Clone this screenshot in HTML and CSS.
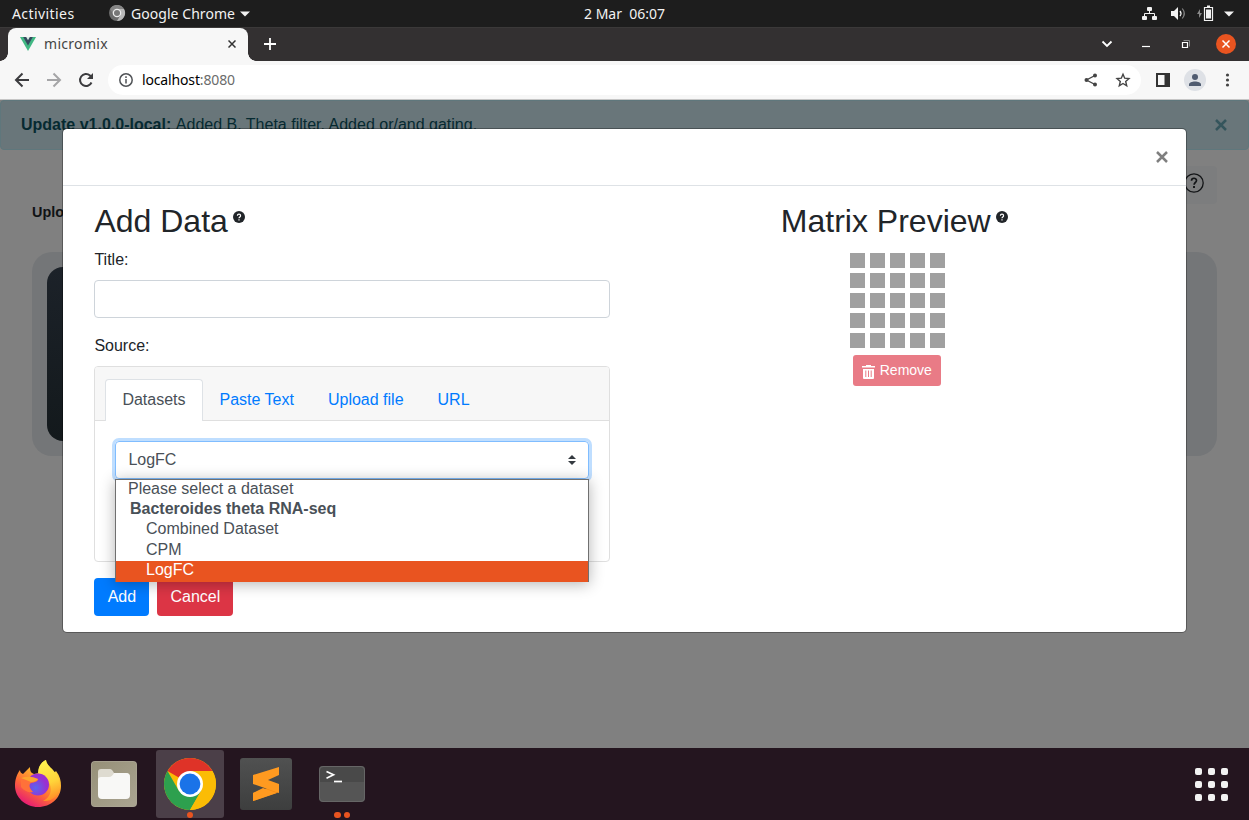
FILE: index.html
```html
<!DOCTYPE html>
<html lang="en">
<head>
<meta charset="utf-8">
<title>micromix</title>
<link rel="stylesheet" href="styles.css">
</head>
<body>
<div class="desktop">
  <header class="topbar">
    <span class="activities">Activities</span>
    <svg class="app-icon" width="17" height="17" viewBox="0 0 17 17"><circle cx="8" cy="8" r="8" fill="#6c6c6c"/><path d="M8 4H15A8 8 0 0 1 8 16L11.500 10z" fill="#b8b8b8"/><path d="M1 4A8 8 0 0 1 15 4H8L4.500 9.500z" fill="#858585"/><circle cx="8" cy="8" r="4.300" fill="#ededed"/><circle cx="8" cy="8" r="3" fill="#777"/></svg>
    <span class="app-name">Google Chrome</span>
    <svg class="app-arrow" width="10" height="6" viewBox="0 0 10 6"><path d="M0 .5h10L5 5.500z" fill="#f2f2f2"/></svg>
    <span class="clock">2 Mar&nbsp; 06:07</span>
    <svg class="tray" width="94" height="18" viewBox="0 0 94 18" fill="#f2f2f2">
      <rect x="5" y="2" width="5" height="4" rx="1"/><rect y="11" width="5" height="4" rx="1"/><rect x="10" y="11" width="5" height="4" rx="1"/><path d="M2.500 11V8.500h10V11M7.500 5v3.500" fill="none" stroke="#f2f2f2"/>
      <path d="M29 6h3l4-4v13l-4-4h-3z"/><path d="M38 6q2 2.500 0 5" fill="none" stroke="#f2f2f2" stroke-width="1.300"/><path d="M40.300 3.500q4 5 0 10" fill="none" stroke="#858585" stroke-width="1.200"/>
      <g transform="translate(-2 0)"><path d="M60 4l-3 5h2v4l3-5h-2z" fill="#888"/><path d="M64.500 2.500h8v13h-8z" fill="none" stroke="#f2f2f2" stroke-width="1.200"/><path d="M67 .5h3v2h-3zM66 4.500h5v9h-5z"/></g>
      <path d="M82 6.500h10l-5 5z"/>
    </svg>
  </header>

  <div class="tabstrip">
    <div class="tab">
      <svg width="16" height="14" viewBox="0 0 16 14"><path d="M0 0h16L8 14z" fill="#41b883"/><path d="M3.200 0h9.600L8 8.500z" fill="#34495e"/><path d="M6.200 0h3.600L8 3.200z" fill="#dceee6"/></svg>
      <span class="tab-title">micromix</span>
      <svg class="tab-close" width="8" height="8" viewBox="0 0 8 8"><path d="M.5.5l7 7m0-7l-7 7" stroke="#333" stroke-width="1.500"/></svg>
    </div>
    <svg class="newtab" width="12" height="12" viewBox="0 0 12 12"><path d="M6 0v12M0 6h12" stroke="#fff" stroke-width="1.800"/></svg>
    <svg class="window-buttons" width="136" height="22" viewBox="0 0 136 22" fill="none" stroke="#fff"><path d="M2.500 8.500l4.500 4.500 4.500-4.500" stroke-width="1.800"/><path d="M42 13.500h8" stroke-width="1.200"/><path d="M82.500 9.500h5v5h-5z" stroke-width="1.200"/><path d="M83.500 7.500h6v6" stroke="#888" stroke-width="1"/><circle cx="126" cy="11" r="10" fill="#e95420" stroke="none"/><path d="M122.500 7.500l7 7m0-7l-7 7" stroke-width="1.500"/></svg>
  </div>

  <div class="toolbar">
    <svg class="nav-icons" width="80" height="18" viewBox="0 0 80 18" fill="none" stroke="#3c3c3f" stroke-width="2"><path d="M15 9H2.500M8.500 2.500L2 9l6.500 6.500"/><path d="M33 9h12.500M39.500 2.500L46 9l-6.500 6.500" stroke="#a5a5a7"/><path d="M77.500 11.500A6 6 0 1 1 76 4.500L78 6.500"/><path d="M79 2v6h-6z" fill="#3c3c3f" stroke="none"/></svg>
    <div class="omnibox">
      <svg width="14" height="14" viewBox="0 0 14 14" fill="none" stroke="#505357" stroke-width="1.500"><circle cx="7" cy="7" r="6.200"/><path d="M7 6v4.500M7 3.300v1.600"/></svg>
      <span class="address"><b>localhost</b>:8080</span>
      <svg class="share" width="48" height="16" viewBox="0 0 48 16"><path d="M12 3.500L3.500 8l8.500 4.500" fill="none" stroke="#444" stroke-width="1.400"/><g fill="#444"><circle cx="12" cy="3.500" r="2"/><circle cx="3.500" cy="8" r="2"/><circle cx="12" cy="12.500" r="2"/></g><path d="M40 2.200l1.700 4 4.300.4-3.300 2.900 1 4.300-3.700-2.300-3.700 2.300 1-4.300L34 6.600l4.300-.4z" fill="none" stroke="#444" stroke-width="1.400"/></svg>
    </div>
    <svg class="chrome-actions" width="80" height="22" viewBox="0 0 80 22"><path d="M2 5h12v12H2z" fill="none" stroke="#333" stroke-width="2"/><path d="M9.500 4H15v14H9.500z" fill="#333"/><circle cx="40" cy="11" r="11" fill="#dee1e6"/><circle cx="40" cy="8" r="3" fill="#4f5b70"/><path d="M34 17v-1.500c0-4 12-4 12 0V17z" fill="#4f5b70"/><g fill="#444"><circle cx="72.500" cy="6" r="1.600"/><circle cx="72.500" cy="11" r="1.600"/><circle cx="72.500" cy="16" r="1.600"/></g></svg>
  </div>

  <main class="viewport">
    <div class="alert"><span><b>Update v1.0.0-local:</b> Added B. Theta filter. Added or/and gating.</span><svg width="12" height="12" viewBox="0 0 12 12"><path d="M1 1l10 10M11 1L1 11" stroke="#35555c" stroke-width="2.500"/></svg></div>
    <div class="page-tools"><svg width="20" height="20" viewBox="0 0 20 20" fill="none" stroke="#131517"><circle cx="10" cy="10" r="9.200" stroke-width="1.300"/><path d="M7.500 7.700c0-3.300 5-3.200 5-.2 0 2-2.400 2-2.400 4.200" stroke-width="1.700"/><path d="M10 13v2" stroke-width="1.900"/></svg></div>
    <div class="upload-label">Upload</div>
    <div class="page-card"><div class="dark-card"></div></div>

    <section class="modal">
      <div class="modal-header"><svg width="12" height="12" viewBox="0 0 12 12"><path d="M1 1l10 10M11 1L1 11" stroke="#7f7f7f" stroke-width="2.500"/></svg></div>
      <div class="modal-body">
        <div class="column">
          <h2>Add Data<svg class="help" width="12" height="12" viewBox="0 0 12 12"><circle cx="6" cy="6" r="6" fill="#212529"/><path d="M4.400 4.700c0-2 3.200-2 3.200 0C7.600 6 6 5.900 6 7.300M6 8.300v1.300" fill="none" stroke="#fff" stroke-width="1.200"/></svg></h2>
          <label for="title">Title:</label>
          <input class="title-input" id="title" type="text">
          <label>Source:</label>
          <div class="source-card">
            <nav class="source-tabs"><a class="active">Datasets</a><a>Paste Text</a><a>Upload file</a><a>URL</a></nav>
            <div class="source-body">
              <div class="select"><span>LogFC</span><svg width="8" height="10" viewBox="0 0 8 10"><path d="M0 4l4-4 4 4zM0 6h8l-4 4z" fill="#343a40"/></svg>
                <div class="options"><div class="placeholder">Please select a dataset</div><div class="group">Bacteroides theta RNA-seq</div><div>Combined Dataset</div><div class="lower">CPM</div><div class="lower selected">LogFC</div></div>
              </div>
            </div>
          </div>
          <div class="actions"><button class="btn add">Add</button><button class="btn cancel">Cancel</button></div>
        </div>
        <div class="column preview">
          <h2>Matrix Preview<svg class="help" width="12" height="12" viewBox="0 0 12 12"><circle cx="6" cy="6" r="6" fill="#212529"/><path d="M4.400 4.700c0-2 3.200-2 3.200 0C7.600 6 6 5.900 6 7.300M6 8.300v1.300" fill="none" stroke="#fff" stroke-width="1.200"/></svg></h2>
          <div class="matrix"><i></i><i></i><i></i><i></i><i></i><i></i><i></i><i></i><i></i><i></i><i></i><i></i><i></i><i></i><i></i><i></i><i></i><i></i><i></i><i></i><i></i><i></i><i></i><i></i><i></i></div>
          <button class="remove"><svg width="13" height="14" viewBox="0 0 13 14"><path d="M0 1h4V0h5v1h4v1.500H0zM1 4h11v9q0 1-1 1H2q-1 0-1-1z" fill="#fff"/><path d="M3.800 5.500V12M6.500 5.500V12M9.200 5.500V12" stroke="#e97b86"/></svg>Remove</button>
        </div>
      </div>
    </section>
  </main>

  <footer class="dock">
    <div class="launcher">
      <svg width="48" height="50" viewBox="0 0 48 50">
        <defs>
          <linearGradient id="fire" x1=".85" y1="0" x2=".25" y2="1"><stop stop-color="#fff44f"/><stop offset=".35" stop-color="#ffb52e"/><stop offset=".65" stop-color="#ff6b35"/><stop offset="1" stop-color="#e3137b"/></linearGradient>
          <linearGradient id="flame" x1=".4" y1="0" x2=".6" y2="1"><stop stop-color="#fff34f"/><stop offset=".55" stop-color="#ffd43a"/><stop offset="1" stop-color="#ff8a25"/></linearGradient>
          <radialGradient id="globe" cx=".4" cy=".65"><stop stop-color="#5a65ef"/><stop offset="1" stop-color="#9a2fd0"/></radialGradient>
        </defs>
        <path d="M6 11c0 2 1 3 3 4l7-7c0 4 1 6 4 7l5-1c-1-5 2-11 7-13 1 6 5 8 8 13l2-2c4 5 5 10 5 15 0 12-10 21-23 21S1 38 1 27c0-7 2-12 5-16z" fill="url(#fire)"/>
        <path d="M24 14C24 8 27 3 32 1c0 7 14 11 14 26 0 9-8 16-17 15 12-6 10-22-5-28z" fill="url(#flame)"/>
        <circle cx="24" cy="25.500" r="11" fill="url(#globe)"/>
        <path d="M7 20q6-3 17 0c0 3-3 3-7 4-3 2-1 6 2 9-4 1-9-1-12-5z" fill="#ff7139"/>
        <path d="M7 19q9-3 17 1-2 3-7 3-5-2-10-4z" fill="#ffa52e"/>
      </svg>
    </div>
    <div class="launcher"><svg width="46" height="46" viewBox="0 0 46 46"><defs><linearGradient id="files" x2="1" y2="1"><stop stop-color="#969078"/><stop offset="1" stop-color="#aaa491"/></linearGradient></defs><rect width="46" height="46" rx="4" fill="#aaa594"/><rect x=".7" y=".7" width="44.600" height="44.600" rx="3.500" fill="url(#files)"/><path d="M7 22V11q0-3 3-3h9q2 0 4 4h12q4 0 4 4v8z" fill="#dedbd0"/><path d="M7 19q0-3 3-3h8q3 0 5-4h12q4 0 4 4v18q0 4-4 4H11q-4 0-4-4z" fill="#f8f8f6"/></svg></div>
    <div class="launcher running">
      <svg width="52" height="52" viewBox="0 0 52 52"><circle cx="26" cy="26" r="26" fill="#fbbc05"/><path d="M26 26L3.500 13A26 26 0 0 1 48.500 13z" fill="#df3328"/><path d="M3.500 13A26 26 0 0 0 26 52L37.300 32.500 14.700 32.500z" fill="#2da04e"/><path d="M26 13h22.500A26 26 0 0 1 26 52L37.300 32.500z" fill="#fbbc05"/><circle cx="26" cy="26" r="13" fill="#fff"/><circle cx="26" cy="26" r="10.400" fill="#1a73e8"/></svg>
      <span class="dots"><i></i></span>
    </div>
    <div class="launcher"><svg width="52" height="52" viewBox="0 0 52 52"><defs><linearGradient id="sublime" x2="0" y2="1"><stop stop-color="#505151"/><stop offset="1" stop-color="#3d3e3e"/></linearGradient></defs><rect width="52" height="52" rx="3" fill="url(#sublime)"/><path d="M13 35l26-9v8L13 43z" fill="#f58b14"/><path d="M13 17L39 9v8l-11 5 11 4v9L13 26z" fill="#ff9a20"/><path d="M13 35l10-5 14 5L13 43z" fill="#ff9a20"/></svg></div>
    <div class="launcher"><svg width="46" height="36" viewBox="0 0 46 36"><rect width="46" height="36" rx="4" fill="#555"/><path d="M0 16V4q0-4 4-4h38q4 0 4 4v12z" fill="#494949"/><rect x=".5" y=".5" width="45" height="35" rx="3.500" fill="none" stroke="#666"/><path d="M7.500 5.500l7 3.300-7 3.400" fill="none" stroke="#fff" stroke-width="1.700"/><path d="M15 15.500h8" stroke="#fff" stroke-width="1.700"/></svg><span class="dots"><i></i><i></i></span></div>
    <div class="app-grid"><i></i><i></i><i></i><i></i><i></i><i></i><i></i><i></i><i></i></div>
  </footer>
</div>
</body>
</html>
```
FILE: styles.css
```css
* { box-sizing: border-box; }
body { margin: 0; font: 16px/1.5 "Liberation Sans", Arial, sans-serif; color: #212529; }
svg { display: block; flex-shrink: 0; }
.desktop { width: 1249px; height: 820px; display: flex; flex-direction: column; overflow: hidden; }

.topbar { height: 28px; flex-shrink: 0; display: flex; align-items: center; background: #1d1d1d; border-bottom: 1px solid #3b3939; color: #f2f2f2; font: 14px/27px "Noto Sans", sans-serif; padding: 0 13px 0 12px; white-space: nowrap; }
.activities { width: 97px; letter-spacing: .42px; }
.app-name { margin-left: 5px; width: 104px; letter-spacing: .05px; }
.app-arrow { margin-left: 5px; }
.clock { margin-left: 334px; }
.tray { margin-left: auto; }

.tabstrip { height: 33px; flex-shrink: 0; display: flex; align-items: center; background: #333031; padding-left: 8px; }
.tab { width: 240px; height: 33px; background: #f7f7f7; border-radius: 8px 8px 0 0; display: flex; align-items: center; padding: 0 12px 1px; font: 14px "Noto Sans", sans-serif; color: #444; position: relative; }
.tab::before, .tab::after { content: ""; position: absolute; bottom: 0; width: 8px; height: 8px; }
.tab::before { left: -8px; background: radial-gradient(circle at 0 0, transparent 7.5px, #f7f7f7 8px); }
.tab::after { right: -8px; background: radial-gradient(circle at 100% 0, transparent 7.5px, #f7f7f7 8px); }
.tab-title { margin: 0 0 2px 8px; letter-spacing: .3px; }
.tab-close { margin: 0 0 0 auto; }
.newtab { margin: 0 0 1px 16px; }
.window-buttons { margin: 0 13px 1px auto; }

.toolbar { height: 39px; flex-shrink: 0; display: flex; align-items: center; background: #f7f7f7; border-bottom: 1px solid #c6c6c6; padding: 0 14px; }
.omnibox { width: 1033px; height: 30px; background: #fff; border-radius: 15px; margin-left: 14px; padding: 0 10px 0 11px; display: flex; align-items: center; }
.address { margin: 0 0 2px 9px; font: 14px "Noto Sans", sans-serif; color: #6b6b6b; letter-spacing: -.15px; }
.address b { font-weight: 400; color: #000; }
.share { margin-left: auto; }
.chrome-actions { margin-left: auto; }

.viewport { height: 648px; flex-shrink: 0; background: #808080; position: relative; overflow: hidden; }
.alert { height: 50px; border: 1px solid #5f777c; border-radius: 4px; background: #69767a; color: #062a31; padding: 0 21px 0 20px; display: flex; align-items: center; justify-content: space-between; }
.alert b { margin-right: 1px; }
.page-tools { height: 38px; width: 100px; margin: 16px 32px 0 auto; border-radius: 4px; background: #7c7d7e; display: flex; align-items: center; justify-content: flex-end; padding: 0 13px 4px 0; }
.upload-label { font-size: 14.4px; line-height: 20px; font-weight: 700; color: #101315; margin: -2px 0 0 32px; }
.page-card { height: 204px; margin: 30px 32px 0; border-radius: 20px; background: #747678; padding: 15px; }
.dark-card { height: 174px; width: 300px; border-radius: 16px; background: linear-gradient(#1c2229, #13191c); }

.modal { position: absolute; left: 62px; top: 28px; width: 1125px; height: 505px; background: #fff; background-clip: padding-box; border: 1px solid rgba(0,0,0,.3); border-radius: 5px; }
.modal-header { height: 57px; border-bottom: 1px solid #dee2e6; display: flex; justify-content: flex-end; align-items: center; padding-right: 18px; }
.modal-body { display: flex; gap: 29.6px; padding: 16px 31px 0 31.4px; }
.column { width: 516px; }
h2 { margin: 0 0 8px; font-size: 32px; line-height: 38.4px; font-weight: 400; display: flex; }
.help { margin: 9px 0 0 5px; }
label { display: block; margin-bottom: 8px; }
.title-input { display: block; width: 100%; height: 38px; border: 1px solid #ced4da; border-radius: 4px; margin-bottom: 16px; background: #fff; }
.source-card { height: 196px; border: 1px solid #dfdfdf; border-radius: 4px; }
.source-tabs { height: 54px; background: #f7f7f7; border-bottom: 1px solid #dfdfdf; border-radius: 3px 3px 0 0; display: flex; padding: 12px 10px 0; color: #007bff; }
.source-tabs a { height: 42px; padding: 8px 16px; border: 1px solid transparent; border-bottom: 0; white-space: nowrap; }
.source-tabs .active { background: #fff; border-color: #dee2e6; border-radius: 4px 4px 0 0; color: #495057; }
.source-body { padding: 20px; }
.select { position: relative; height: 38px; border: 1px solid #80bdff; border-radius: 4px; box-shadow: 0 0 0 3px #bfdeff; color: #495057; display: flex; align-items: center; justify-content: space-between; padding: 0 12px 1px; }
.options { position: absolute; left: -1px; right: -1px; top: 37px; height: 103px; border: 1px solid #707070; background: #fff; box-shadow: 0 2px 14px rgba(0,0,0,.3); }
.options div { height: 20.25px; line-height: 16px; padding-left: 29.6px; }
.options .placeholder { padding-left: 11.6px; line-height: 18px; }
.options .group { padding-left: 13.6px; font-weight: 700; }
.options .lower { line-height: 18px; }
.options .selected { background: #e95420; color: #fff; }
.actions { display: flex; gap: 8px; margin-top: 16px; }
.btn { height: 38px; border: 0; border-radius: 4px; color: #fff; font: 16px "Liberation Sans", Arial, sans-serif; padding: 0 13px; }
.add { background: #007bff; width: 55px; }
.cancel { background: #dc3545; width: 76px; }
.preview { display: flex; flex-direction: column; align-items: center; }
.preview h2 { padding-right: 6px; margin-bottom: 13px; }
.matrix { display: grid; grid-template-columns: repeat(5, 15px); grid-auto-rows: 15px; gap: 5px; }
.matrix i { background: #a0a0a0; }
.remove { height: 31px; width: 88px; margin-top: 7px; border: 0; border-radius: 3px; background: #e97b86; color: #fff; font: 14px "Liberation Sans", Arial, sans-serif; display: flex; align-items: center; padding: 0 9px 1px; gap: 4.5px; }
.remove svg { margin-top: 4px; }

.dock { height: 72px; flex-shrink: 0; background: #24151f; display: flex; align-items: center; gap: 8px; padding: 0 21.5px 0 4px; }
.launcher { width: 68px; height: 68px; border-radius: 3px; display: flex; align-items: center; justify-content: center; position: relative; }
.running { background: #4b3f48; }
.dots { position: absolute; bottom: 0; left: 0; right: 0; display: flex; justify-content: center; gap: 3px; }
.dots i { width: 6.5px; height: 6.5px; border-radius: 50%; background: #e95420; }
.app-grid { margin: 0 0 0 auto; display: grid; grid-template-columns: repeat(3, 7px); grid-auto-rows: 7px; gap: 6px; }
.app-grid i { background: #f2f2f2; border-radius: 2px; }
```
